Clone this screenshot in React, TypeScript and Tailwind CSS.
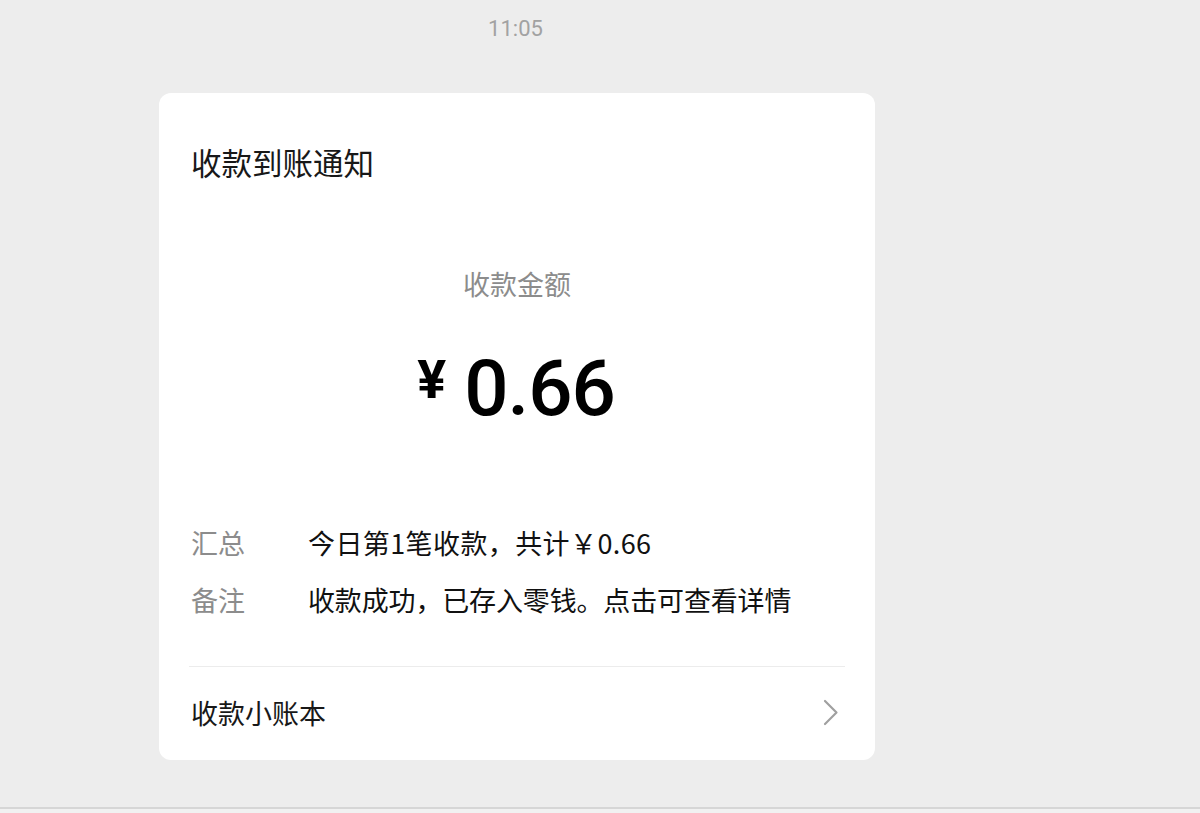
const cjk = "font-['Noto_Sans_CJK_SC',sans-serif]";
const num = "font-['Roboto','Noto_Sans_CJK_SC',sans-serif]";

interface Row {
  label: string;
  value: string;
}

const rows: Row[] = [
  { label: '汇总', value: '今日第1笔收款，共计￥0.66' },
  { label: '备注', value: '收款成功，已存入零钱。点击可查看详情' },
];

export default function App() {
  return (
    <div className="w-[1200px] h-[813px] bg-[#ededed] flex flex-col overflow-hidden">
      <div className="flex-1 pl-[159px]">
        <div className="w-[716px] pt-[18px]">
          <div className={`${num} text-[22px] leading-none text-[#a2a2a2] text-center pr-[3px]`}>11:05</div>

          <div className="mt-[53px] bg-white rounded-[12px] px-8 pt-[54px] pb-[34px]">
            <h1 className={`${cjk} text-[30.5px] leading-[31px] text-[#181818]`}>收款到账通知</h1>

            <div className="mt-[92px] flex flex-col items-center">
              <p className={`${cjk} text-[27px] leading-[27px] text-[#8c8c8c]`}>收款金额</p>
              <div className="mt-[53px] flex items-start gap-[18px] pr-[2px]">
                <span className={`${num} mt-[3px] text-[54px] leading-none font-bold text-black`}>¥</span>
                <span className={`${num} text-[78px] leading-[78px] font-medium text-black tracking-[-1px]`}>0.66</span>
              </div>
            </div>

            <div className="mt-[101px] flex flex-col gap-[30px]">
              {rows.map((row, i) => (
                <div key={row.label} className={`${cjk} flex text-[27px] leading-[27px]`}>
                  <span className="w-[117px] shrink-0 text-[#8c8c8c]">{row.label}</span>
                  <span className={i === 0 ? 'text-[#111111] tracking-[0.4px]' : 'text-[#111111] tracking-[-0.15px]'}>{row.value}</span>
                </div>
              ))}
            </div>

            <div className="mt-[53px] -mx-[2px] h-px bg-[#ececec]" />

            <div className="mt-[32px] flex items-center justify-between h-[27px]">
              <span className={`${cjk} text-[27px] leading-[27px] text-[#181818]`}>收款小账本</span>
              <svg width="16" height="27" viewBox="0 0 16 27" className="mr-[4px]">
                <polyline points="2,2 13.5,13.5 2,25" fill="none" stroke="#a0a0a0" strokeWidth="2.2" strokeLinecap="round" strokeLinejoin="round" />
              </svg>
            </div>
          </div>
        </div>
      </div>
      <div className="h-[6px] border-t-2 border-[#d6d6d6] bg-[#f1f1f1]" />
    </div>
  );
}
